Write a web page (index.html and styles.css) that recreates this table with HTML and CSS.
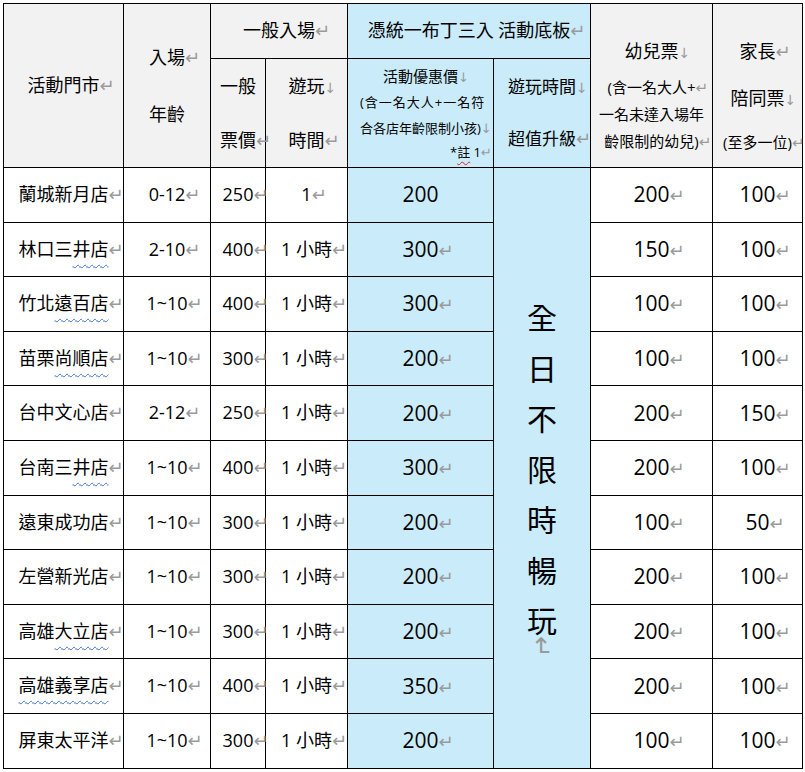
FILE: index.html
```html
<!DOCTYPE html>
<html lang="zh-Hant">
<head>
<meta charset="utf-8">
<title>活動價目表</title>
<link rel="stylesheet" href="styles.css">
</head>
<body>
<div class="page">
<table class="price">
<colgroup>
<col class="c1"><col class="c2"><col class="c3"><col class="c4"><col class="c5"><col class="c6"><col class="c7"><col class="c8">
</colgroup>
<thead>
<tr class="h1">
<th rowspan="2" class="g">活動門市<span class="pm">↵</span></th>
<th rowspan="2" class="g age"><div>入場<span class="pm">↵</span></div><div>年齡</div></th>
<th colspan="2" class="g">一般入場<span class="pm">↵</span></th>
<th colspan="2" class="b">憑統一布丁三入 活動底板<span class="pm">↵</span></th>
<th rowspan="2" class="g kid">
<div class="k1">幼兒票<span class="br">↓</span></div>
<div class="k2">(含一名大人+<span class="pm">↵</span></div>
<div class="k2">一名未達入場年</div>
<div class="k2">齡限制的幼兒)<span class="pm">↵</span></div>
</th>
<th rowspan="2" class="g par">
<div class="q1">家長<span class="pm">↵</span></div>
<div class="q2">陪同票<span class="br">↓</span></div>
<div class="q3">(至多一位)<span class="pm">↵</span></div>
</th>
</tr>
<tr class="h2">
<th class="g two"><div>一般</div><div>票價<span class="pm">↵</span></div></th>
<th class="g two"><div>遊玩<span class="br">↓</span></div><div>時間<span class="pm">↵</span></div></th>
<th class="b promo">
<div class="p1">活動優惠價<span class="br">↓</span></div>
<div class="p2">(含一名大人+一名符</div>
<div class="p3">合各店年齡限制小孩)<span class="br">↓</span></div>
<div class="p4">*<span class="red">註</span> 1<span class="pm">↵</span></div>
</th>
<th class="b upg"><div>遊玩時間<span class="br">↓</span></div><div>超值升級<span class="pm">↵</span></div></th>
</tr>
</thead>
<tbody>
<tr>
<td>蘭城新月店<span class="pm">↵</span></td>
<td>0-12<span class="pm">↵</span></td>
<td>250<span class="pm">↵</span></td>
<td>1<span class="pm">↵</span></td>
<td class="b big">200</td>
<td rowspan="11" class="b vt"><div class="vtext">全日不限時暢<span class="last">玩</span><span class="vm">↵</span></div></td>
<td class="big">200<span class="pm">↵</span></td>
<td class="big">100<span class="pm">↵</span></td>
</tr>
<tr>
<td>林口三<span class="sp">井店</span><span class="pm">↵</span></td>
<td>2-10<span class="pm">↵</span></td>
<td>400<span class="pm">↵</span></td>
<td>1 小時<span class="pm">↵</span></td>
<td class="b big">300<span class="pm">↵</span></td>
<td class="big">150<span class="pm">↵</span></td>
<td class="big">100<span class="pm">↵</span></td>
</tr>
<tr>
<td>竹北<span class="sp">遠百店</span><span class="pm">↵</span></td>
<td>1~10<span class="pm">↵</span></td>
<td>400<span class="pm">↵</span></td>
<td>1 小時<span class="pm">↵</span></td>
<td class="b big">300<span class="pm">↵</span></td>
<td class="big">100<span class="pm">↵</span></td>
<td class="big">100<span class="pm">↵</span></td>
</tr>
<tr>
<td>苗栗<span class="sp">尚順店</span><span class="pm">↵</span></td>
<td>1~10<span class="pm">↵</span></td>
<td>300<span class="pm">↵</span></td>
<td>1 小時<span class="pm">↵</span></td>
<td class="b big">200<span class="pm">↵</span></td>
<td class="big">100<span class="pm">↵</span></td>
<td class="big">100<span class="pm">↵</span></td>
</tr>
<tr>
<td>台中文心店<span class="pm">↵</span></td>
<td>2-12<span class="pm">↵</span></td>
<td>250<span class="pm">↵</span></td>
<td>1 小時<span class="pm">↵</span></td>
<td class="b big">200<span class="pm">↵</span></td>
<td class="big">200<span class="pm">↵</span></td>
<td class="big">150<span class="pm">↵</span></td>
</tr>
<tr>
<td>台南三<span class="sp">井店</span><span class="pm">↵</span></td>
<td>1~10<span class="pm">↵</span></td>
<td>400<span class="pm">↵</span></td>
<td>1 小時<span class="pm">↵</span></td>
<td class="b big">300<span class="pm">↵</span></td>
<td class="big">200<span class="pm">↵</span></td>
<td class="big">100<span class="pm">↵</span></td>
</tr>
<tr>
<td>遠東成功店<span class="pm">↵</span></td>
<td>1~10<span class="pm">↵</span></td>
<td>300<span class="pm">↵</span></td>
<td>1 小時<span class="pm">↵</span></td>
<td class="b big">200<span class="pm">↵</span></td>
<td class="big">100<span class="pm">↵</span></td>
<td class="big">50<span class="pm">↵</span></td>
</tr>
<tr>
<td>左營新光店<span class="pm">↵</span></td>
<td>1~10<span class="pm">↵</span></td>
<td>300<span class="pm">↵</span></td>
<td>1 小時<span class="pm">↵</span></td>
<td class="b big">200<span class="pm">↵</span></td>
<td class="big">200<span class="pm">↵</span></td>
<td class="big">100<span class="pm">↵</span></td>
</tr>
<tr>
<td>高雄<span class="sp">大立店</span><span class="pm">↵</span></td>
<td>1~10<span class="pm">↵</span></td>
<td>300<span class="pm">↵</span></td>
<td>1 小時<span class="pm">↵</span></td>
<td class="b big">200<span class="pm">↵</span></td>
<td class="big">200<span class="pm">↵</span></td>
<td class="big">100<span class="pm">↵</span></td>
</tr>
<tr>
<td><span class="sp">高雄義享店</span><span class="pm">↵</span></td>
<td>1~10<span class="pm">↵</span></td>
<td>400<span class="pm">↵</span></td>
<td>1 小時<span class="pm">↵</span></td>
<td class="b big">350<span class="pm">↵</span></td>
<td class="big">200<span class="pm">↵</span></td>
<td class="big">100<span class="pm">↵</span></td>
</tr>
<tr>
<td>屏東太平洋<span class="pm">↵</span></td>
<td>1~10<span class="pm">↵</span></td>
<td>300<span class="pm">↵</span></td>
<td>1 小時<span class="pm">↵</span></td>
<td class="b big">200<span class="pm">↵</span></td>
<td class="big">100<span class="pm">↵</span></td>
<td class="big">100<span class="pm">↵</span></td>
</tr>
</tbody>
</table>
</div>
</body>
</html>
```

FILE: styles.css
```css
html, body {
  margin: 0;
  background: #fff;
}
body {
  font-family: "Open Sans", "Noto Sans CJK TC", sans-serif;
  color: #000;
}
.page {
  padding: 3px 0 0 3px;
}
.price {
  border-collapse: collapse;
  table-layout: fixed;
  width: 799px;
}
.c1 { width: 120px; }
.c2 { width: 87px; }
.c3 { width: 55px; }
.c4 { width: 82px; }
.c5 { width: 146px; }
.c6 { width: 97px; }
.c7 { width: 122px; }
.c8 { width: 90px; }

.price th,
.price td {
  border: 1px solid #000;
  padding: 0;
  text-align: center;
  vertical-align: middle;
  font-weight: normal;
  font-size: 18px;
  line-height: 1.2;
  white-space: nowrap;
}
.h1 { height: 55px; }
.h2 { height: 109px; }
.price tbody tr { height: 54.6px; }

.g { background: #f2f2f2; }
.price .b { background: #c9ebfa; }

.pm, .br {
  display: inline-block;
  width: 0;
  color: #9a9a9a;
  font-family: "DejaVu Sans", sans-serif;
  font-size: 18px;
  line-height: 1;
  text-align: left;
  white-space: nowrap;
}
.br { font-size: 14px; }

.age div { line-height: 57px; }
.two { padding-top: 5px; }
.two div { line-height: 54px; }
.upg div { line-height: 52px; font-size: 17px; }

.price .kid,
.price .par {
  vertical-align: top;
  padding-top: 24px;
}
.k1 { line-height: 46px; }
.k2 { font-size: 15px; line-height: 27px; }
.k2 .pm, .q3 .pm { font-size: 15px; }
.q1 { line-height: 46px; }
.q2 { line-height: 48px; }
.q3 { font-size: 15px; line-height: 40px; }

.price .promo { padding: 0 12px; }
.p1 { font-size: 15px; line-height: 26px; }
.p2 { font-size: 13px; line-height: 26px; letter-spacing: 1px; }
.p3 { font-size: 13px; line-height: 26px; text-align: left; }
.p4 { font-size: 13px; line-height: 22px; text-align: right; }
.p1 .br, .p3 .br, .p4 .pm { font-size: 13px; }
.red {
  text-decoration: underline wavy #e02020;
  text-decoration-thickness: 1px;
  text-underline-offset: 4px;
}

.price .big { font-size: 21px; }

.sp {
  text-decoration: underline wavy #3f72cf;
  text-decoration-thickness: 1px;
  text-underline-offset: 8px;
}

.price .vt {
  vertical-align: top;
  padding-top: 122px;
}
.vtext {
  writing-mode: vertical-rl;
  height: 380px;
  margin: 0 auto;
  font-size: 30px;
  line-height: 36px;
  letter-spacing: 20.5px;
  font-family: "Noto Sans CJK TC", sans-serif;
}
.vtext .last { letter-spacing: 0; }
.vm {
  color: #9a9a9a;
  font-family: "DejaVu Sans", sans-serif;
  font-size: 26px;
  letter-spacing: 0;
}
```
